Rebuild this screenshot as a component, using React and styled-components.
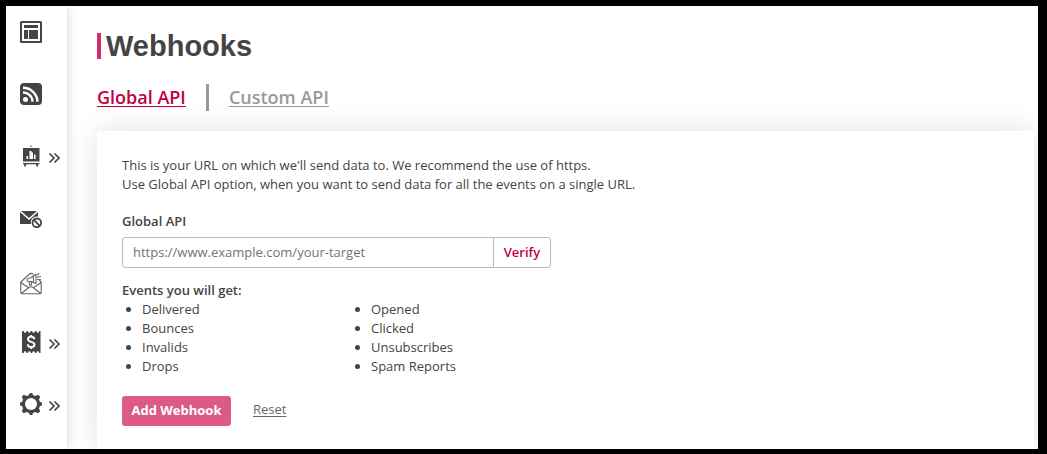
import React from "react";
import styled, { createGlobalStyle, css } from "styled-components";

const GlobalStyle = createGlobalStyle`
  *, *::before, *::after { box-sizing: border-box; }
  body {
    margin: 0;
    background: #000;
    color: #444;
    font: 13px/19px "Open Sans", "Noto Sans", sans-serif;
  }
  button, input { font: inherit; }
`;

const Frame = styled.div`
  display: flex;
  min-height: 100vh;
  border: solid #000;
  border-width: 6px 9px 5px 6px;
  background: #fff;
`;

const Sidebar = styled.nav`
  flex: none;
  width: 61px;
  background: #fff;
  box-shadow: 0 0 10px rgba(0, 0, 0, 0.18);
  clip-path: inset(0 -12px 0 0);
`;

const NavList = styled.ul`
  margin: 0;
  padding: 0;
  list-style: none;
`;

const NavLink = styled.a`
  display: flex;
  align-items: center;
  gap: 6px;
  height: 62px;
  padding: 0 0 10px 14px;
  color: #444;

  svg { display: block; flex: none; overflow: visible; }
`;

const Chevron = styled.svg`
  margin-top: 4px;
`;

const Main = styled.main`
  display: flex;
  flex-direction: column;
  flex: 1;
  min-width: 0;
  padding: 24px 4px 0 30px;
  overflow: hidden;
`;

const Title = styled.h1`
  display: flex;
  align-items: center;
  gap: 5px;
  margin: 0;
  color: #444;
  font: bold 29px/32px "Liberation Sans", Arial, sans-serif;

  &::before {
    content: "";
    width: 4px;
    height: 26px;
    background: #d32c66;
  }
`;

const Tabs = styled.nav`
  display: flex;
  align-items: center;
  margin: 22px 0 20px;
`;

const Tab = styled.a`
  color: ${(p) => (p.$active ? "#c2003f" : "#999")};
  font-size: 18px;
  font-weight: 600;
  line-height: 27px;
  text-decoration-thickness: 1px;
  text-underline-offset: 2px;

  & + & {
    margin-left: 20px;
    padding-left: 20px;
    border-left: 3px solid #999;
  }
`;

const Card = styled.form`
  flex: 1;
  padding: 25px 25px 23px;
  border-radius: 3px 3px 0 0;
  background: #fff;
  box-shadow: 0 0 30px rgba(0, 0, 0, 0.12);
`;

const Intro = styled.p`
  margin: 0 0 18px;
`;

const heading = css`
  display: block;
  margin: 0;
  font-size: 13px;
  font-weight: 600;
  line-height: 19px;
`;

const Label = styled.label`
  ${heading}
`;

const Subheading = styled.h2`
  ${heading}
`;

const UrlField = styled.div`
  display: flex;
  max-width: 429px;
  height: 31px;
  margin: 6px 0 13px;
  border: 1px solid #bbb;
  border-radius: 3px;
`;

const UrlInput = styled.input`
  flex: 1;
  min-width: 0;
  padding: 0 10px;
  border: 0;
  background: none;
  color: #444;

  &::placeholder { color: #6c757d; opacity: 1; }
`;

const VerifyButton = styled.button`
  flex: none;
  width: 57px;
  padding: 0;
  border: 0;
  border-left: 1px solid #bbb;
  background: none;
  color: #c2003f;
  font-weight: 600;
`;

const EventColumns = styled.div`
  display: flex;
`;

const EventList = styled.ul`
  width: 229px;
  margin: 0;
  padding: 0 0 0 20px;
`;

const Actions = styled.div`
  display: flex;
  align-items: center;
  gap: 22px;
  margin-top: 20px;
`;

const SubmitButton = styled.button`
  width: 109px;
  height: 30px;
  padding: 0 0 2px;
  border: 0;
  border-radius: 3px;
  background: #dc5a87;
  color: #fff;
  font-weight: 700;
`;

const ResetLink = styled.a`
  padding-bottom: 4px;
  color: #666;
  text-underline-offset: 2px;
`;

const Icon = ({ children }) => (
  <svg width="22" height="22" viewBox="0 0 22 22" fill="currentColor" aria-hidden="true">
    {children}
  </svg>
);

const DashboardIcon = () => (
  <Icon>
    <rect x="1" y="1" width="20" height="20" rx="0.5" fill="none" stroke="currentColor" strokeWidth="2" />
    <path d="M4 4h14v3H4zM4 9h4v9H4zM9 9h9v9H9z" />
    <path d="M8.500 9v9" stroke="#fff" strokeWidth="1" />
  </Icon>
);

const FeedIcon = () => (
  <Icon>
    <rect width="22" height="22" rx="4" />
    <circle cx="5.500" cy="16.500" r="2.500" fill="#fff" />
    <path d="M3 9.500a9.200 9.200 0 0 1 9.500 9.200M3 4.800a14.500 14.500 0 0 1 14.500 13.900" fill="none" stroke="#fff" strokeWidth="2.400" />
  </Icon>
);

const ReportsIcon = () => (
  <Icon>
    <path d="M9.500 1.500Q11-.7 12.500 1.500zM3 3h16.500v13.500H3zM3 18h16.500v1.200H3zM4.500 19h2l-.8 2.500H4zM15.800 19h2l.5 2.500h-1.700z" />
    <path d="M6.500 11h1.600v3H6.500zM9.500 6h2v8h-2zM11.500 7.500H13V14h-1.500zM14 9.500h1.600V14H14z" fill="#fff" />
  </Icon>
);

const BlockedMailIcon = () => (
  <Icon>
    <path d="M1 4h16L9 11zM0 5l9 8 9-8v4.600A6 6 0 0 0 11 17H0z" />
    <g fill="none" stroke="currentColor" strokeWidth="1.800">
      <circle cx="16.800" cy="15.800" r="4.300" />
      <path d="m13.800 12.800 6 6" />
    </g>
  </Icon>
);

const CampaignIcon = () => (
  <Icon>
    <g fill="none" stroke="#666" strokeWidth="1.100" strokeLinejoin="round" strokeLinecap="round" transform="translate(0 4)">
      <path d="M.8 9v10.500q0 1.300 1.300 1.300h17.800q1.300 0 1.300-1.300V9l-2.500-2.500M.8 9 9 1.500q2-2 4-.5M.8 9.500l7.500 5M21.200 9.500l-7.500 5M1.500 20.300l7.500-5.800q2-1.500 4 0l7.500 5.800" />
      <path d="M8 5.500q-1 0-1 1.500t1 1.500h3l5 2V1L11 4.800zM9.500 8.500v3.500h2V8.500M13.500 3.500v6M17.500 2l1.500-1.500M17.500 4.300l3-.8M17.500 6.500h3" />
    </g>
  </Icon>
);

const BillingIcon = () => (
  <Icon>
    <path d="M2 0h1.500l1 1.800h1.300L6.800 0h1l1 1.800h1.200L11 0h1l1 1.800h1.300L15.200 0h1l1 1.800h1.200L19.400 0h1.100v22h-1.100l-1-1.800h-1.200l-1 1.800h-1l-1-1.800H13L12 22h-1l-1-1.800H8.800L7.800 22h-1l-1-1.800H4.500L3.500 22H2z" />
    <path d="M14.500 8.200C14 6.300 12.800 5.800 11.200 5.800c-1.900 0-3.200.8-3.200 2.400 0 3.300 6.500 2 6.500 5.300 0 1.700-1.400 2.500-3.300 2.500-1.900 0-3.200-.8-3.500-2.700M11.200 4v2M11.200 15.800v2.200" fill="none" stroke="#fff" strokeWidth="2" />
  </Icon>
);

const SettingsIcon = () => (
  <Icon>
    <path d="M9.800 0h2.400l1 2.200 2.200.8 2.800-1.200 2 2L19 6.600l.8 2.200 2.200 1v2.400l-2.200 1-.8 2.200 1.200 2.800-2 2-2.800-1.200-2.200.8-1 2.200H9.800l-1-2.200-2.200-.8-2.800 1.200-2-2L3 15.400l-.8-2.200-2.200-1V9.800l2.200-1L3 6.600 1.800 3.800l2-2L6.600 3l2.200-.8z" />
    <circle cx="11" cy="11" r="6" fill="#fff" />
  </Icon>
);

const NAV = [
  { label: "Dashboard", Art: DashboardIcon },
  { label: "Feed", Art: FeedIcon },
  { label: "Reports", Art: ReportsIcon, expandable: true },
  { label: "Suppressions", Art: BlockedMailIcon },
  { label: "Campaigns", Art: CampaignIcon },
  { label: "Billing", Art: BillingIcon, expandable: true },
  { label: "Settings", Art: SettingsIcon, expandable: true },
];

const EVENTS = [
  ["Delivered", "Bounces", "Invalids", "Drops"],
  ["Opened", "Clicked", "Unsubscribes", "Spam Reports"],
];

export default function App() {
  return (
    <>
      <GlobalStyle />
      <Frame>
        <Sidebar aria-label="Main">
          <NavList>
            {NAV.map(({ label, Art, expandable }) => (
              <li key={label}>
                <NavLink href="#" aria-label={label}>
                  <Art />
                  {expandable && (
                    <Chevron width="12" height="12" viewBox="0 0 12 12" fill="none" stroke="currentColor" strokeWidth="1.700" aria-hidden="true">
                      <path d="M1.500 1.500 6 6l-4.500 4.500M6.500 1.500 11 6l-4.500 4.500" />
                    </Chevron>
                  )}
                </NavLink>
              </li>
            ))}
          </NavList>
        </Sidebar>
        <Main>
          <Title>Webhooks</Title>
          <Tabs aria-label="API type">
            <Tab href="#global" $active aria-current="page">Global API</Tab>
            <Tab href="#custom">Custom API</Tab>
          </Tabs>
          <Card onSubmit={(e) => e.preventDefault()}>
            <Intro>
              This is your URL on which we'll send data to. We recommend the use of https.
              <br />
              Use Global API option, when you want to send data for all the events on a single URL.
            </Intro>
            <Label htmlFor="target-url">Global API</Label>
            <UrlField>
              <UrlInput id="target-url" type="url" placeholder="https://www.example.com/your-target" />
              <VerifyButton type="button">Verify</VerifyButton>
            </UrlField>
            <Subheading>Events you will get:</Subheading>
            <EventColumns>
              {EVENTS.map((names) => (
                <EventList key={names[0]}>
                  {names.map((name) => (
                    <li key={name}>{name}</li>
                  ))}
                </EventList>
              ))}
            </EventColumns>
            <Actions>
              <SubmitButton type="submit">Add Webhook</SubmitButton>
              <ResetLink href="#reset">Reset</ResetLink>
            </Actions>
          </Card>
        </Main>
      </Frame>
    </>
  );
}
